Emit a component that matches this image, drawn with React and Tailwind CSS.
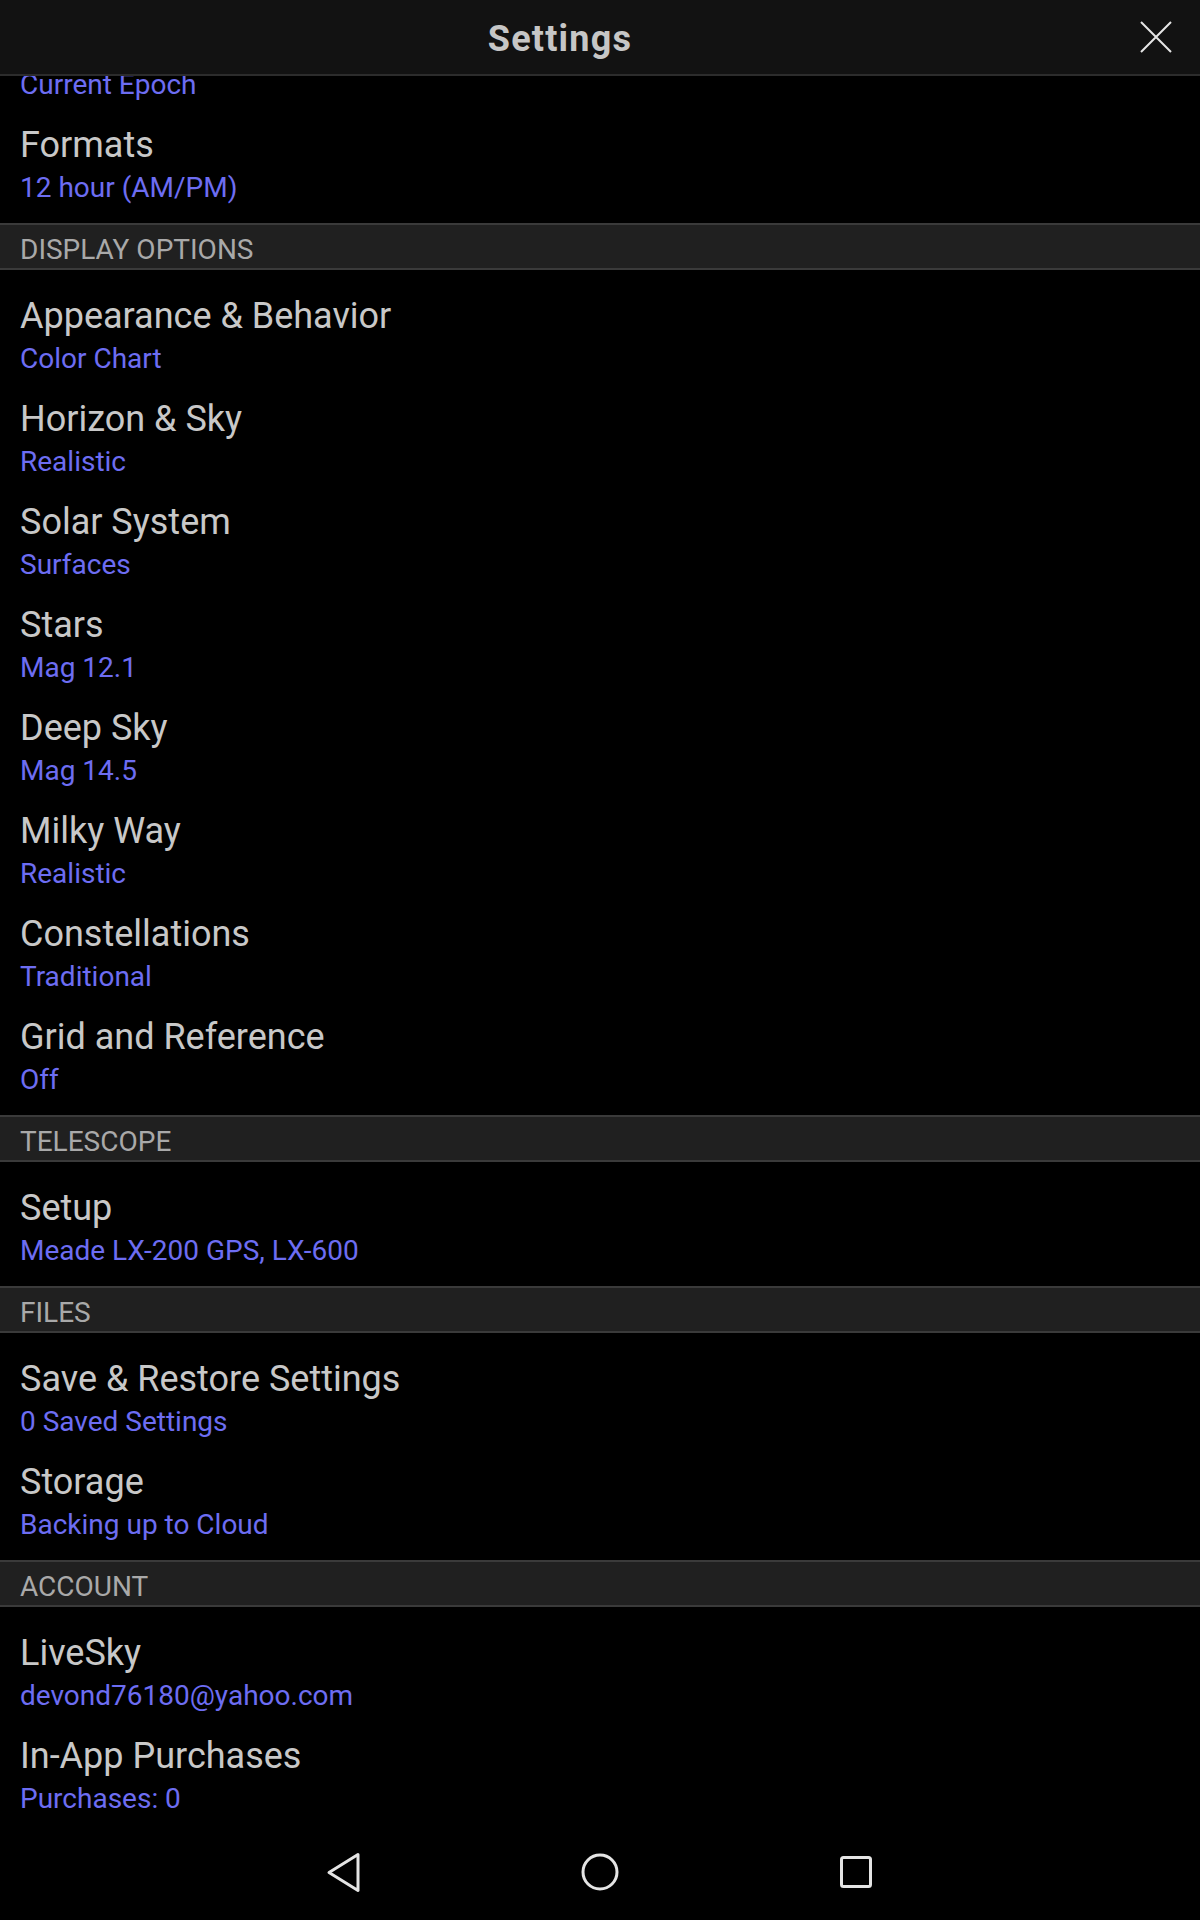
const sections = [
  {
    title: null,
    rows: [
      { label: '', value: 'Current Epoch' },
      { label: 'Formats', value: '12 hour (AM/PM)' },
    ],
  },
  {
    title: 'DISPLAY OPTIONS',
    rows: [
      { label: 'Appearance & Behavior', value: 'Color Chart' },
      { label: 'Horizon & Sky', value: 'Realistic' },
      { label: 'Solar System', value: 'Surfaces' },
      { label: 'Stars', value: 'Mag 12.1' },
      { label: 'Deep Sky', value: 'Mag 14.5' },
      { label: 'Milky Way', value: 'Realistic' },
      { label: 'Constellations', value: 'Traditional' },
      { label: 'Grid and Reference', value: 'Off' },
    ],
  },
  {
    title: 'TELESCOPE',
    rows: [{ label: 'Setup', value: 'Meade LX-200 GPS, LX-600' }],
  },
  {
    title: 'FILES',
    rows: [
      { label: 'Save & Restore Settings', value: '0 Saved Settings' },
      { label: 'Storage', value: 'Backing up to Cloud' },
    ],
  },
  {
    title: 'ACCOUNT',
    rows: [
      { label: 'LiveSky', value: 'devond76180@yahoo.com' },
      { label: 'In-App Purchases', value: 'Purchases: 0' },
    ],
  },
];

function Row({ label, value }) {
  return (
    <div className="h-[103px] pt-[15px] px-[20px] flex flex-col">
      <div className="h-[41px] text-[36px] leading-[41px] text-[#c8c8c8] whitespace-nowrap">{label}</div>
      <div className="mt-[6px] text-[28px] leading-[32px] text-[#6d6df2] whitespace-nowrap">{value}</div>
    </div>
  );
}

function SectionHeader({ title }) {
  return (
    <div className="h-[47px] bg-[#202020] border-y-2 border-[#3a3a3a] px-[20px] pt-[9px]">
      <div className="text-[28px] leading-[32px] text-[#a9a9a9]">{title}</div>
    </div>
  );
}

export default function App() {
  return (
    <div className="w-[1200px] h-[1920px] bg-black flex flex-col font-['Roboto',sans-serif] overflow-hidden">
      {/* Title bar */}
      <div className="h-[76px] shrink-0 bg-[#121212] border-b-2 border-[#2c2c2c] flex relative z-10">
        <div className="flex-1 text-center text-[36px] font-bold tracking-[1.2px] text-[#c6c6c6] leading-[40px] pt-[19px]">
          Settings
        </div>
        <button className="w-[80px] h-full flex items-center pl-[20px]">
          <svg width="32" height="32" viewBox="0 0 32 32">
            <path d="M1 1 L31 31 M31 1 L1 31" stroke="#e6e6e6" strokeWidth="2" fill="none" />
          </svg>
        </button>
      </div>

      {/* Scrolled list */}
      <div className="flex-1 overflow-hidden">
        {sections.map((s, i) => (
          <div key={i}>
            {s.title && <SectionHeader title={s.title} />}
            <div className={(i === 0 ? '-mt-[69px] ' : 'pt-[11px] ') + 'pb-[10px]'}>
              {s.rows.map(r => (
                <Row key={r.value} {...r} />
              ))}
            </div>
          </div>
        ))}
      </div>

      {/* Android nav bar */}
      <div className="h-[96px] shrink-0 bg-black flex justify-center items-center">
        <div className="w-[256px] flex justify-center">
          <svg width="36" height="41" viewBox="0 0 36 41">
            <path d="M32 2.5 L3 20.5 L32 38.5 Z" stroke="#e4e4e4" strokeWidth="3" strokeLinejoin="round" fill="none" />
          </svg>
        </div>
        <div className="w-[256px] flex justify-center">
          <svg width="40" height="40" viewBox="0 0 40 40">
            <circle cx="20" cy="20" r="17" stroke="#e4e4e4" strokeWidth="3" fill="none" />
          </svg>
        </div>
        <div className="w-[256px] flex justify-center">
          <svg width="34" height="34" viewBox="0 0 34 34">
            <rect x="2.5" y="2.5" width="29" height="29" rx="2" stroke="#e4e4e4" strokeWidth="3" fill="none" />
          </svg>
        </div>
      </div>
    </div>
  );
}
